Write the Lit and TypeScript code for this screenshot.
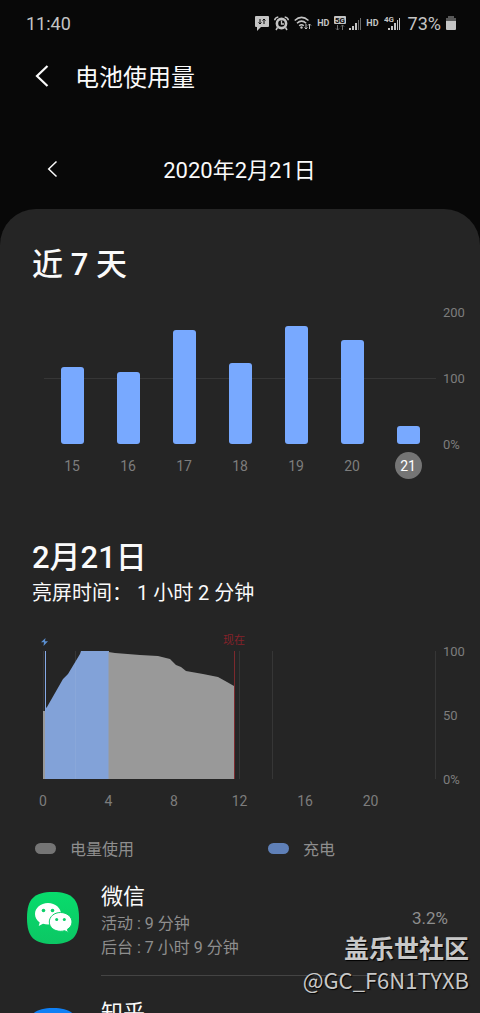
import { LitElement, html, css, svg, nothing } from "lit";
import { customElement, state } from "lit/decorators.js";

interface Day { day: number; used: number; }
interface AppUsage { name: string; icon: string; active?: string; background?: string; percent?: string; }

const DAYS: Day[] = [
  { day: 15, used: 117 },
  { day: 16, used: 109 },
  { day: 17, used: 173 },
  { day: 18, used: 123 },
  { day: 19, used: 179 },
  { day: 20, used: 158 },
  { day: 21, used: 27 },
];

const APPS: AppUsage[] = [
  { name: "微信", icon: "wechat", active: "9 分钟", background: "7 小时 9 分钟", percent: "3.2%" },
  { name: "知乎", icon: "zhihu" },
];

const signal = (top: string) => svg`
  <rect x="0" y="10" width="2" height="2" fill="#c4c4c4"/>
  <rect x="3" y="8" width="2" height="4" fill="#c4c4c4"/>
  <rect x="6" y="5" width="2" height="7" fill="#c4c4c4"/>
  <rect x="9" y="2" width="1" height="10" fill="${top}"/>
  <rect x="11" y="0" width="1" height="12" fill="${top}"/>`;

@customElement("status-bar")
class StatusBar extends LitElement {
  static styles = css`
    :host { display: flex; align-items: center; justify-content: space-between; height: 46px; padding: 0 24px 0 26px; color: #c4c4c4; font-size: 18px; }
    .icons { display: flex; align-items: center; gap: 5px; }
    .hd { font-size: 9px; font-weight: 700; }
    .pct { margin-left: 3px; }
    svg { display: block; }
    .tag { font: 700 8px Roboto, sans-serif; }
  `;
  render() {
    return html`
      <span>11:40</span>
      <div class="icons">
        <svg width="14" height="15" viewBox="0 0 14 15"><path d="M1 0H13Q14 0 14 1V10Q14 11 13 11H6L2 15V11H1Q0 11 0 10V1Q0 0 1 0Z" fill="#c4c4c4"/><path d="M5 3V8M3.500 6.500L5 8L6.500 6.500M9 8V3M7.500 4.500L9 3L10.500 4.500" stroke="#080808" fill="none"/></svg>
        <svg width="15" height="15" viewBox="0 0 15 15"><circle cx="7.500" cy="7.500" r="4.600" fill="none" stroke="#c4c4c4" stroke-width="2.600"/><path d="M7.500 4.500V8H10" stroke="#c4c4c4" stroke-width="1.300" fill="none"/><path d="M.7 4.300Q1 1.300 4.300.9M14.300 4.300Q14 1.300 10.700.9M3.500 11.500L2 14M11.500 11.500L13 14" fill="none" stroke="#c4c4c4" stroke-width="1.500"/></svg>
        <svg width="18" height="15" viewBox="0 0 18 15"><g fill="none" stroke="#c4c4c4" stroke-width="1.500"><path d="M.7 4.500Q7.500-1.700 14.500 4.500M3 7.200Q7.500 3 12.200 7.200M5.200 9.800Q7.500 7.600 9.800 9.800"/><path d="M12 8V13M10.500 11.500L12 13L13.500 11.500M15.500 13V8M14 9.500L15.500 8L17 9.500" stroke-width="1"/></g><circle cx="7.500" cy="11.500" r="1.200" fill="#c4c4c4"/></svg>
        <span class="hd">HD</span>
        <svg width="27" height="16" viewBox="0 0 27 16"><rect x="0" y="1" width="12" height="8" rx="1" fill="#c4c4c4"/><text class="tag" x="1" y="8" fill="#080808">5G</text><path d="M3.500 10V15M2 13.500L3.500 15L5 13.500M8.500 15V10M7 11.500L8.500 10L10 11.500" fill="none" stroke="#707070"/><g transform="translate(15 3)">${signal("#6a6a6a")}</g></svg>
        <span class="hd">HD</span>
        <svg width="16" height="16" viewBox="0 0 16 16"><g transform="translate(4 3)">${signal("#c4c4c4")}</g><rect x="0" y="0" width="11" height="8" fill="#080808"/><text class="tag" x="0" y="7" fill="#c4c4c4">4G</text></svg>
        <span class="pct">73%</span>
        <svg width="10" height="14" viewBox="0 0 10 14"><path d="M2 0H8V2H10V6H0V2H2Z" fill="#585858"/><path d="M0 5H10V13Q10 14 9 14H1Q0 14 0 13Z" fill="#c4c4c4"/></svg>
      </div>`;
  }
}

@customElement("week-chart")
class WeekChart extends LitElement {
  @state() selected = 21;
  static styles = css`
    :host { display: grid; grid-template-columns: 1fr 37px; column-gap: 7px; padding-left: 44px; }
    .plot { display: grid; grid-template-columns: repeat(7, 1fr); height: 132px; align-items: end; justify-items: center; background: linear-gradient(#363636, #363636) 0 50% / 100% 1px no-repeat; }
    .bar { width: 23px; border-radius: 3px; background: #78a9ff; }
    .scale { display: flex; flex-direction: column; justify-content: space-between; color: #7d7d7d; font-size: 13px; }
    .scale span { display: flex; align-items: center; height: 0; }
    .days { display: grid; grid-template-columns: repeat(7, 1fr); justify-items: center; margin-top: 8px; }
    button { width: 27px; height: 27px; padding: 0; border: 0; border-radius: 50%; background: none; color: #7d7d7d; font: 14px Roboto, sans-serif; }
    .on { background: #757575; color: #fff; }
  `;
  render() {
    return html`
      <div class="plot">${DAYS.map((d) => html`<div class="bar" style="height:${d.used / 2}%"></div>`)}</div>
      <div class="scale"><span>200</span><span>100</span><span>0%</span></div>
      <div class="days">${DAYS.map((d) => html`<button class=${d.day === this.selected ? "on" : ""} @click=${() => (this.selected = d.day)}>${d.day}</button>`)}</div>`;
  }
}

@customElement("level-chart")
class LevelChart extends LitElement {
  static styles = css`
    :host { display: grid; grid-template-columns: 1fr 37px; column-gap: 7px; padding-left: 43px; }
    .plot { position: relative; height: 128px; }
    .area { display: block; width: 100%; height: 100%; }
    .bolt { position: absolute; left: -2px; bottom: 100%; margin-bottom: 5px; }
    .now { position: absolute; left: 48.6%; bottom: 100%; transform: translateX(-50%); color: #84222a; font-size: 11px; line-height: 20px; white-space: nowrap; }
    .scale { display: flex; flex-direction: column; justify-content: space-between; color: #7d7d7d; font-size: 13px; }
    .scale span { display: flex; align-items: center; height: 0; }
    .hours { display: flex; justify-content: space-between; margin-top: 12px; color: #7d7d7d; font-size: 14px; line-height: 20px; }
    .hours span { display: flex; justify-content: center; width: 0; }
  `;
  render() {
    return html`
      <div class="plot">
        <svg class="area" viewBox="0 0 393 128" preserveAspectRatio="none">
          <path d="M.5 0V128M32.500 0V128M196.500 0V128M229.500 0V128M392.500 0V128" stroke="#363636" fill="none"/>
          <path d="M0 128V60H3V128Z" fill="#999"/>
          <path d="M2 128V58L4 56L20 28L25 23L37 3L38 0H66V128Z" fill="#82a2d8"/>
          <path d="M65.500 128V1L72 2L97 4L115 5L127 8L133 14L138 16L143 20L160 23L175 26L184 31L191 35V128Z" fill="#999"/>
          <path d="M2.500 0V60" stroke="#86aae6"/>
          <path d="M32.500 12V128" stroke="#89a7d9"/>
          <path d="M191.500 0V128" stroke="#7c292d"/>
        </svg>
        <svg class="bolt" width="7" height="8" viewBox="0 0 7 8"><path d="M4.500 0L0 4.300H3L2.500 8L7 3.300H4Z" fill="#5b8fd0"/></svg>
        <span class="now">现在</span>
      </div>
      <div class="scale"><span>100</span><span>50</span><span>0%</span></div>
      <div class="hours"><span>0</span><span>4</span><span>8</span><span>12</span><span>16</span><span>20</span><span></span></div>`;
  }
}

@customElement("app-row")
class AppRow extends LitElement {
  static properties = { app: { attribute: false } };
  declare app: AppUsage;
  static styles = css`
    :host { display: flex; padding: 0 32px 0 27px; gap: 22px; }
    .icon { width: 52px; height: 52px; margin-top: 32px; flex: none; }
    .body { display: flex; flex: 1; align-items: center; justify-content: space-between; padding: 16px 0 15px; border-bottom: 1px solid #444; }
    .text { align-self: flex-start; padding-top: 5px; }
    h3 { margin: 0; color: #fafafa; font-size: 22px; font-weight: 400; line-height: 31px; }
    p { margin: 0; color: #8e8e8e; font-size: 16px; line-height: 24px; }
    .pct { color: #8e8e8e; font-size: 17px; }
  `;
  icon() {
    const shape = "M26 0C45 0 52 7 52 26S45 52 26 52S0 45 0 26S7 0 26 0Z";
    if (this.app.icon === "zhihu") return html`<svg class="icon" viewBox="0 0 52 52"><path d=${shape} fill="#0f80f5"/></svg>`;
    return html`<svg class="icon" viewBox="0 0 52 52">
      <defs><linearGradient id="g" x1="0" y1="0" x2="0" y2="1"><stop offset="0" stop-color="#08dc6c"/><stop offset="1" stop-color="#0cc764"/></linearGradient></defs>
      <path d=${shape} fill="url(#g)"/>
      <path d="M21 11C13.500 11 8 16 8 22C8 25.500 9.800 28.400 12.700 30.400L11.700 34L16 31.700Q18.300 32.500 21 32.500C28.500 32.500 34 28 34 22S28.500 11 21 11Z" fill="#fff"/>
      <circle cx="16.500" cy="18.500" r="1.800" fill="#0bcf68"/><circle cx="25.500" cy="18.500" r="1.800" fill="#0bcf68"/>
      <path d="M33.500 20.500C27 20.500 22.300 24.800 22.300 30S27 39.300 33.500 39.300Q35.700 39.300 37.700 38.700L41.300 40.600L40.400 37.300C43.200 35.600 45 33 45 30C45 24.800 40 20.500 33.500 20.500Z" fill="#fff" stroke="#0bcf68" stroke-width="1"/>
      <circle cx="29.700" cy="27.500" r="1.500" fill="#0bcf68"/><circle cx="37.300" cy="27.500" r="1.500" fill="#0bcf68"/>
    </svg>`;
  }
  render() {
    const { name, active, background, percent } = this.app;
    return html`${this.icon()}
      <div class="body">
        <div class="text">
          <h3>${name}</h3>
          ${active ? html`<p>活动 : ${active}</p>` : nothing}
          ${background ? html`<p>后台 : ${background}</p>` : nothing}
        </div>
        ${percent ? html`<span class="pct">${percent}</span>` : nothing}
      </div>`;
  }
}

@customElement("app-root")
class AppRoot extends LitElement {
  static styles = css`
    :host { display: block; position: relative; height: 100vh; overflow: hidden; background: #080808; color: #fafafa; font-family: Roboto, "Noto Sans CJK SC", sans-serif; }
    button { display: block; padding: 0; border: 0; background: none; color: inherit; }
    button svg { display: block; fill: none; stroke: #fafafa; }
    header { display: flex; align-items: center; gap: 26px; height: 60px; padding: 0 0 2px 35px; }
    h1 { margin: 0; padding-top: 3px; font-size: 24px; font-weight: 400; line-height: 32px; }
    .date { display: grid; grid-template-columns: 1fr auto 1fr; align-items: center; box-sizing: border-box; height: 101px; padding: 20px 48px 0 47px; font-size: 22px; }
    .date span { padding-bottom: 1px; }
    main { border-radius: 36px 36px 0 0; background: #252525; padding-top: 35px; }
    h2 { margin: 0 32px; font-size: 31px; font-weight: 500; line-height: 42px; }
    week-chart { margin-top: 26px; }
    .day { margin-top: 58px; }
    .screen { margin: 0 32px; font-size: 20px; line-height: 28px; }
    level-chart { margin-top: 44px; }
    .legend { display: grid; grid-template-columns: 11fr 10fr; margin-top: 29px; padding-left: 35px; color: #8e8e8e; font-size: 16px; line-height: 20px; }
    .key { display: flex; align-items: center; gap: 14px; }
    .swatch { width: 21px; height: 11px; margin-bottom: 3px; border-radius: 6px; background: #757575; }
    .charge { background: #5f80b8; }
    .mark { position: absolute; right: 11px; bottom: 18px; text-align: right; color: #c8c8c8; text-shadow: 1px 1px 1px #000; font-family: "Noto Sans CJK SC", sans-serif; font-size: 22px; line-height: 32px; }
    .mark b { display: block; font-size: 25px; font-weight: 700; }
  `;
  render() {
    return html`
      <status-bar></status-bar>
      <header>
        <button aria-label="返回"><svg width="14" height="22" viewBox="0 0 14 22"><path d="M12.500 1L2 11L12.500 21" stroke-width="2.200"/></svg></button>
        <h1>电池使用量</h1>
      </header>
      <div class="date">
        <button aria-label="前一天"><svg width="11" height="18" viewBox="0 0 11 18"><path d="M9.500 1.500L1.700 9L9.500 16.500" stroke-width="1.500"/></svg></button>
        <span>2020年2月21日</span>
      </div>
      <main>
        <h2>近 7 天</h2>
        <week-chart></week-chart>
        <h2 class="day">2月21日</h2>
        <p class="screen">亮屏时间： 1 小时 2 分钟</p>
        <level-chart></level-chart>
        <div class="legend">
          <span class="key"><i class="swatch"></i>电量使用</span>
          <span class="key"><i class="swatch charge"></i>充电</span>
        </div>
        ${APPS.map((a) => html`<app-row .app=${a}></app-row>`)}
      </main>
      <div class="mark"><b>盖乐世社区</b>@GC_F6N1TYXB</div>`;
  }
}
